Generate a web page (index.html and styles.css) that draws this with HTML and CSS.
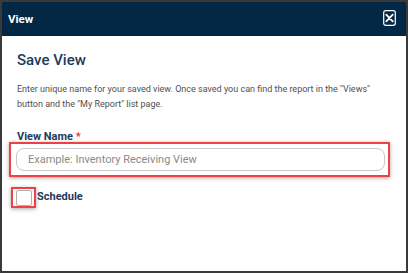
FILE: index.html
```html
<!DOCTYPE html>
<html lang="en">
<head>
  <meta charset="UTF-8">
  <meta name="viewport" content="width=device-width, initial-scale=1.0">
  <title>View</title>
  <link rel="stylesheet" href="styles.css">
</head>
<body>

  <div class="modal">
    <!-- Header -->
    <div class="modal-header">
      <span class="modal-title">View</span>
      <button class="close-btn" aria-label="Close">
        <svg width="13" height="16" viewBox="0 0 13 16">
          <rect x="0.7" y="0.7" width="11.6" height="14.6" rx="2" fill="none" stroke="#ffffff" stroke-width="1.2"/>
          <path d="M3.3 4.6 L9.7 11.4 M9.7 4.6 L3.3 11.4" stroke="#ffffff" stroke-width="1.8" stroke-linecap="round"/>
        </svg>
      </button>
    </div>

    <!-- Body -->
    <div class="modal-body">
      <h2>Save View</h2>
      <p class="intro">Enter unique name for your saved view. Once saved you can find the report in the "Views" button and the "My Report" list page.</p>

      <label class="field-label" for="view-name">View Name <span class="required">*</span></label>
      <div class="highlight input-wrap">
        <input id="view-name" type="text" placeholder="Example: Inventory Receiving View">
      </div>

      <div class="schedule-row">
        <div class="highlight check-wrap">
          <span class="checkbox"></span>
        </div>
        <span class="schedule-label">Schedule</span>
      </div>
    </div>
  </div>

</body>
</html>
```

FILE: styles.css
```css
:root {
  --navy: #022846;
  --title-color: #1d3a5c;
  --text-color: #505050;
  --frame-color: #3a3a3a;
  --mark-red: #ef4045;
}

html, body {
  margin: 0;
  padding: 0;
}

body {
  font-family: Roboto, 'Liberation Sans', sans-serif;
  background-color: #ffffff;
}

.modal {
  box-sizing: border-box;
  width: 408px;
  height: 273px;
  border: 2px solid var(--frame-color);
  background-color: #ffffff;
  display: flex;
  flex-direction: column;
}

.modal-header {
  height: 34px;
  background-color: var(--navy);
  display: flex;
  align-items: center;
  justify-content: space-between;
  padding: 0 10px 0 6px;
}

.modal-title {
  color: #ffffff;
  font-weight: bold;
  font-size: 11.5px;
}

.close-btn {
  background: none;
  border: none;
  padding: 0;
  margin-top: -3px;
  display: flex;
  cursor: pointer;
}

.modal-body {
  padding: 14px 0 0 15px;
}

.modal-body h2 {
  margin: 0;
  font-size: 15px;
  font-weight: 500;
  color: var(--title-color);
  line-height: 20px;
}

.intro {
  margin: 12px 15px 0 0;
  font-size: 9px;
  line-height: 14.5px;
  color: var(--text-color);
}

.field-label {
  display: block;
  margin-top: 19px;
  font-size: 11px;
  font-weight: bold;
  color: var(--title-color);
  line-height: 13px;
}

.required {
  color: #d9343a;
}

.highlight {
  box-sizing: border-box;
  border: 2px solid var(--mark-red);
  box-shadow: 0 1px 4px rgba(0, 0, 0, 0.35);
}

.input-wrap {
  margin: -1px 0 0 -8px;
  width: 381px;
  padding: 4px 3px 4px 5px;
}

.input-wrap input {
  box-sizing: border-box;
  display: block;
  width: 100%;
  height: 23px;
  border: 1px solid #c9c9c9;
  border-radius: 8px;
  padding: 0 11px;
  font-family: Roboto, 'Liberation Sans', sans-serif;
  font-size: 11px;
  color: #333;
  outline: none;
}

.input-wrap input::placeholder {
  color: #8a8a8a;
}

.schedule-row {
  display: flex;
  align-items: flex-start;
  margin-top: 10px;
}

.check-wrap {
  margin-left: -6px;
  padding: 1px 2px 0 3px;
  display: flex;
}

.checkbox {
  width: 14px;
  height: 14px;
  border: 1px solid #b0b0b0;
  border-radius: 2px;
  background: #fff;
}

.schedule-label {
  font-size: 11px;
  font-weight: bold;
  line-height: 13px;
  color: var(--title-color);
  margin-left: 1px;
  margin-top: 3px;
}
```
